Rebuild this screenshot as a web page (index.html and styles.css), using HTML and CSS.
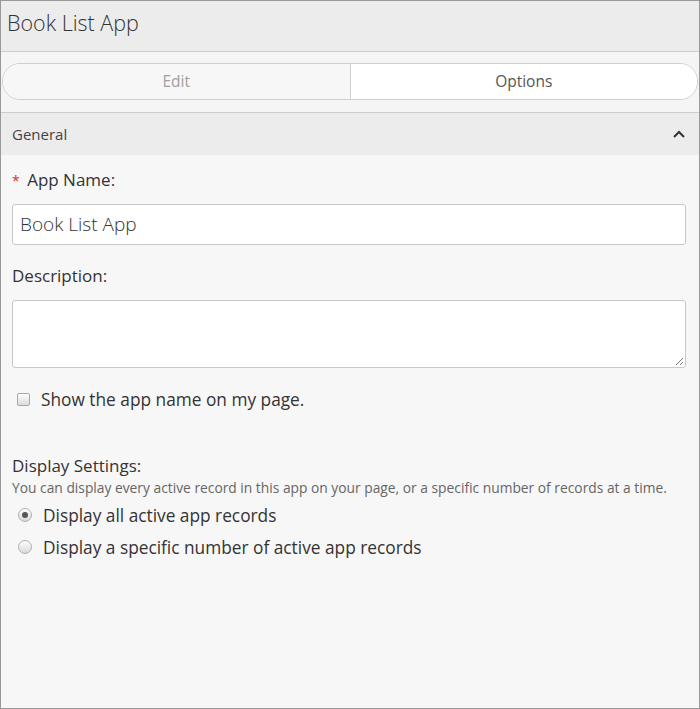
FILE: index.html
```html
<!DOCTYPE html>
<html>
    <head>
        <title>Book List App</title>
        <meta charset="UTF-8">
        <meta name="viewport" content="width=device-width, initial-scale=1.0">
        <link rel="stylesheet" href="styles.css">
    </head>
    <body>
        <div class="panel">
            <div class="titulo">Book List App</div>

            <div class="pestanas">
                <div class="tabs">
                    <div class="tab">Edit</div>
                    <div class="tab activa">Options</div>
                </div>
            </div>

            <div class="seccion">
                <span>General</span>
                <svg class="chevron" width="14" height="10" viewBox="0 0 14 10">
                    <polyline points="2,8 7,3 12,8" fill="none" stroke="#333" stroke-width="2"/>
                </svg>
            </div>

            <div class="contenido">
                <label class="etiqueta"><span class="req">*</span> App Name:</label>
                <div class="campo">Book List App</div>

                <label class="etiqueta desc">Description:</label>
                <div class="area">
                    <svg class="grip" width="10" height="10" viewBox="0 0 10 10">
                        <line x1="9" y1="2" x2="2" y2="9" stroke="#777" stroke-width="1"/>
                        <line x1="9" y1="6" x2="6" y2="9" stroke="#777" stroke-width="1"/>
                    </svg>
                </div>

                <div class="opcion check">
                    <span class="caja"></span>
                    <span>Show the app name on my page.</span>
                </div>

                <div class="etiqueta ajustes">Display Settings:</div>
                <div class="ayuda">You can display every active record in this app on your page, or a specific number of records at a time.</div>

                <div class="opcion radio primera">
                    <span class="circulo marcado"></span>
                    <span>Display all active app records</span>
                </div>
                <div class="opcion radio">
                    <span class="circulo"></span>
                    <span>Display a specific number of active app records</span>
                </div>
            </div>
        </div>
    </body>
</html>
```

FILE: styles.css
```css
body{
    margin: 0;
    font-family: "Open Sans", "Noto Sans", sans-serif;
    color: #333;
}
.panel{
    box-sizing: border-box;
    width: 700px;
    height: 709px;
    border: 1px solid #999;
    background: #f7f7f7;
}
.titulo{
    height: 50px;
    line-height: 44px;
    padding-left: 6px;
    font-size: 21.5px;
    font-weight: 300;
    color: #333;
    background: #ececec;
    border-bottom: 1px solid #cdcdcd;
}
.pestanas{
    padding: 11px 1px 12px 1px;
    background: #f5f5f5;
    border-bottom: 1px solid #cdcdcd;
}
.tabs{
    display: flex;
    height: 35px;
    border: 1px solid #d0d0d0;
    border-radius: 18px;
    overflow: hidden;
}
.tab{
    flex: 1;
    text-align: center;
    line-height: 35px;
    font-size: 15.5px;
    color: #a0a0a0;
    background: #f7f7f7;
}
.tab.activa{
    color: #555;
    background: #fff;
    border-left: 1px solid #d0d0d0;
}
.seccion{
    display: flex;
    justify-content: space-between;
    align-items: center;
    height: 42px;
    padding: 0 13px 0 11px;
    background: #ececec;
    font-size: 15px;
    color: #444;
}
.contenido{
    padding: 14px 13px 0 11px;
}
.etiqueta{
    display: block;
    line-height: 22px;
    font-size: 17px;
    color: #333;
}
.req{
    color: #d9342b;
    font-size: 14px;
    margin-right: 3px;
}
.campo{
    box-sizing: border-box;
    height: 41px;
    margin-top: 12px;
    padding-left: 7px;
    line-height: 39px;
    font-size: 19px;
    font-weight: 300;
    color: #333;
    background: #fff;
    border: 1px solid #c8c8c8;
    border-radius: 3px;
}
.etiqueta.desc{
    margin-top: 20px;
}
.area{
    position: relative;
    box-sizing: border-box;
    height: 68px;
    margin-top: 13px;
    background: #fff;
    border: 1px solid #c8c8c8;
    border-radius: 3px;
}
.grip{
    position: absolute;
    right: 1px;
    bottom: 1px;
}
.opcion{
    display: flex;
    align-items: center;
    height: 32px;
    font-size: 17.3px;
    color: #333;
}
.check{
    margin-top: 15px;
}
.caja{
    box-sizing: border-box;
    width: 13px;
    height: 13px;
    margin: 0 11px 0 5px;
    border: 1px solid #a8a8a8;
    border-radius: 2px;
    background: linear-gradient(#fdfdfd, #dcdcdc);
}
.ajustes{
    margin-top: 40px;
}
.ayuda{
    margin-top: 2px;
    line-height: 17px;
    font-size: 13.8px;
    color: #666;
}
.primera{
    margin-top: 3px;
}
.circulo{
    position: relative;
    box-sizing: border-box;
    width: 14px;
    height: 14px;
    margin: 0 11px 0 6px;
    border: 1px solid #b0b0b0;
    border-radius: 50%;
    background: linear-gradient(#fdfdfd, #dadada);
}
.circulo.marcado::after{
    content: "";
    position: absolute;
    left: 3px;
    top: 3px;
    width: 6px;
    height: 6px;
    border-radius: 50%;
    background: #555;
}
```
